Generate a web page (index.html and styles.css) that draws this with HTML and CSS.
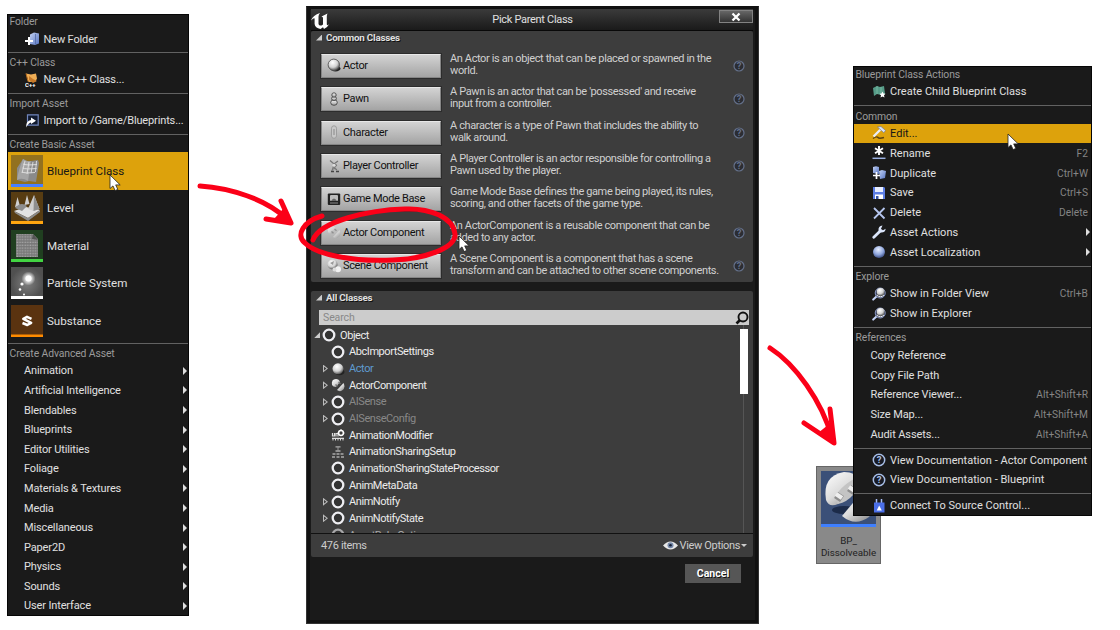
FILE: index.html
```html
<!DOCTYPE html>
<html lang="en">
<head>
<meta charset="utf-8">
<title>Pick Parent Class</title>
<link rel="stylesheet" href="styles.css">
</head>
<body>
<svg class="defs" width="0" height="0">
  <defs>
    <linearGradient id="gBlue" x1="0" y1="0" x2="1" y2="1"><stop offset="0" stop-color="#c3d2f5"/><stop offset="1" stop-color="#5674c0"/></linearGradient>
    <linearGradient id="gWhite" x1="0" y1="0" x2="0" y2="1"><stop offset="0" stop-color="#fff"/><stop offset="1" stop-color="#999"/></linearGradient>
    <linearGradient id="gPlug" x1="0" y1="0" x2=".8" y2="1"><stop offset="0" stop-color="#fff"/><stop offset=".55" stop-color="#dcdcdc"/><stop offset="1" stop-color="#8e8e8e"/></linearGradient>
    <radialGradient id="gBall" cx=".4" cy=".3" r=".7"><stop offset="0" stop-color="#fff"/><stop offset=".6" stop-color="#d2d2d2"/><stop offset="1" stop-color="#555"/></radialGradient>
    <radialGradient id="gGlobe" cx=".45" cy=".3" r=".7"><stop offset="0" stop-color="#e8efff"/><stop offset=".6" stop-color="#8fa6dd"/><stop offset="1" stop-color="#3b4d83"/></radialGradient>
    <radialGradient id="gGlow"><stop offset="0" stop-color="#fff"/><stop offset=".35" stop-color="#fff" stop-opacity=".85"/><stop offset="1" stop-color="#fff" stop-opacity="0"/></radialGradient>
    <radialGradient id="gGray"><stop offset="0" stop-color="#808080"/><stop offset="1" stop-color="#505050"/></radialGradient>
    <pattern id="dots" width="2.6" height="2.8" patternUnits="userSpaceOnUse"><rect width="2.6" height="2.8" fill="#777"/><rect x=".5" y=".6" width="1.5" height="1.3" fill="#a9a9a9"/></pattern>
    <symbol id="cursor" viewBox="0 0 12 18"><path d="M1 1v13.500l3-2.600 2.100 4.700 2.700-1.200-2.100-4.500h4.500z" fill="#fff" stroke="#222" stroke-width=".8"/></symbol>
    <symbol id="help" viewBox="0 0 14 14"><circle cx="7" cy="7" r="5.700" fill="#171b25" stroke="currentColor" stroke-width="1.500"/><text x="7" y="10.400" class="help-mark">?</text></symbol>
    <symbol id="helpdim" viewBox="0 0 14 14"><circle cx="7" cy="7" r="5" fill="#2b2d33" stroke="currentColor" stroke-width="1.200"/><text x="7" y="10.200" class="help-mark">?</text></symbol>
    <symbol id="ring" viewBox="0 0 14 14"><circle cx="7" cy="7" r="5.300" fill="#333" stroke="#eeeef2" stroke-width="2.300"/></symbol>
    <symbol id="mag" viewBox="0 0 14 14"><path d="M5 9L1.200 12.600" stroke="#c3d2f5" stroke-width="2" stroke-linecap="round"/><circle cx="8.200" cy="6" r="5" fill="#26304f" stroke="#8d9cc8" stroke-width="1"/><circle cx="8.600" cy="5" r="4" fill="url(#gBall)"/><path d="M4.500 8q4 3.500 7.500 0" fill="none" stroke="#eee"/></symbol>
    <symbol id="folder" viewBox="0 0 14 14"><path d="M5 2.500l4-2 5 1v10l-4 1.500-5-1z" fill="url(#gBlue)"/><path d="M10.500 2v10" stroke="#5168a4" stroke-width=".8"/><path d="M0 9h8M4 5v8" stroke="#fff" stroke-width="2"/></symbol>
    <symbol id="cpp" viewBox="0 0 14 14"><path d="M1 .5l5 1 5-1 1 5-1.500 3-7 .5z" fill="#f0ae55"/><path d="M4 3l4 3 4 2-4 2-4-3z" fill="#c87a28"/><path d="M1 .5l2 8" stroke="#b96b1d"/><text x="0" y="13.500" class="cpp-mark">C++</text></symbol>
    <symbol id="import" viewBox="0 0 14 14"><path d="M2.500.8h10.700v10.400H2.500z" fill="#111a2d" stroke="#7186bd" stroke-width="1.200"/><path d="M1 13.500q0-7 5-7.500V3.500L11 6.800 6 10V8.500Q3.500 9 1 13.500z" fill="#fff"/></symbol>
    <symbol id="childbp" viewBox="0 0 14 14"><path d="M1 3l4-2 3 1 4-1 1 8-4 1-4-1-3 2z" fill="#579c88"/><path d="M5 1v8M9 2v8" stroke="#83c4ae" stroke-width=".7"/><path d="M10.500 6.500l1 2 2 .2-1.500 1.500.5 2.300-2-1-2 1 .5-2.300L7.500 8.700l2-.2z" fill="#fff"/></symbol>
    <symbol id="edit" viewBox="0 0 14 14"><path d="M1 12.500q4-2.500 5-1t6 0" fill="none" stroke="#5b4310" stroke-width="1.400"/><path d="M1.500 10.500L8.500 3.500" stroke="#e8eefb" stroke-width="2.300"/><path d="M5.500 1l3.500-.5 4.500 4-1.700 2.200z" fill="#dde5f5" stroke="#66718e" stroke-width=".6"/></symbol>
    <symbol id="rename" viewBox="0 0 14 14"><path d="M7 0v9M3 2.200l8 5M11 2.200l-8 5" stroke="#fff" stroke-width="1.900"/><path d="M.5 12.300h13" stroke="#9bb0e0" stroke-width="1.500"/></symbol>
    <symbol id="dup" viewBox="0 0 14 14"><path d="M1 1l3-.8L7 1v7L1 7z" fill="url(#gBlue)"/><path d="M7 5l3-1 4 1-1 7-5 1z" fill="url(#gBlue)"/><path d="M1 9.500h7M4.500 6v7" stroke="#fff" stroke-width="1.700"/></symbol>
    <symbol id="save" viewBox="0 0 14 14"><path d="M1 1h11l1 1v11H1z" fill="#5c7ee6"/><path d="M3 1h8v5H3z" fill="#e8eeff"/><path d="M3 8.500h8V13H3z" fill="#fff"/><path d="M4 10h2.500v3H4z" fill="#3554a8"/></symbol>
    <symbol id="del" viewBox="0 0 14 14"><path d="M2 2l10.500 10.500M12.500 2L2 12.500" stroke="#b6c6ee" stroke-width="1.800"/></symbol>
    <symbol id="wrench" viewBox="0 0 14 14"><path d="M1.800 12.300L8.500 5.800" stroke="#dce6fb" stroke-width="2.800" stroke-linecap="round"/><path d="M10.500.5Q6 1 6.500 5.500l2 2Q13 8 13.700 3.700L11 5.300 8.900 4z" fill="#dce6fb"/></symbol>
    <symbol id="globe" viewBox="0 0 14 14"><circle cx="7" cy="7" r="6" fill="url(#gGlobe)"/></symbol>
    <symbol id="plug" viewBox="0 0 14 14"><path d="M4.500 0v5M9.500 0v5" stroke="#a7bdf5" stroke-width="1.500"/><path d="M2 3.500h10.500v10H2z" fill="#4b6fe8"/><path d="M7.200 6.500l2.600 5H4.700z" fill="#fff"/></symbol>
    <symbol id="ball" viewBox="0 0 14 14"><ellipse cx="8.500" cy="10" rx="5" ry="3.300" fill="#222"/><circle cx="7" cy="6.800" r="5.500" fill="url(#gBall)"/></symbol>
    <symbol id="actorbtn" viewBox="0 0 14 14"><ellipse cx="8.500" cy="10.500" rx="5" ry="3" fill="#222"/><circle cx="6.800" cy="6.800" r="5.700" fill="url(#gBall)" stroke="#555" stroke-width=".9"/></symbol>
    <symbol id="comp" viewBox="0 0 14 14"><path d="M1 7Q0 1 5 1q3 0 4 3L5 9Q2 9 1 7z" fill="url(#gPlug)"/><path d="M6 12L12.500 5Q15 10 11 12.500 8.500 14 6 12z" fill="url(#gPlug)"/><path d="M4.500 6.500l2 1.800M7.500 4l2 1.800" stroke="#777" stroke-width="1.300"/></symbol>
    <symbol id="pawn" viewBox="0 0 14 14"><g fill="url(#gWhite)" stroke="#444" stroke-width=".9"><ellipse cx="7" cy="10.500" rx="3.300" ry="2.800"/><ellipse cx="7" cy="6.500" rx="2.400" ry="2"/><circle cx="7" cy="3" r="2.200"/></g></symbol>
    <symbol id="char" viewBox="0 0 14 14"><rect x="4.500" y=".8" width="5" height="12.500" rx="2.500" fill="#c8c8c8" stroke="#999" stroke-width=".9"/><path d="M7 4v6" stroke="#888"/></symbol>
    <symbol id="ctrl" viewBox="0 0 14 14"><path d="M3 1.500L7 5l4-3" fill="none" stroke="#777" stroke-width="1.300"/><path d="M7 5l3 1-2 2.500 2 2.500-3-1.500-2 2 1-3.500z" fill="#888" stroke="#666" stroke-width=".6"/><path d="M4 12.500h3M9 12.500h3" stroke="#444" stroke-width="1.500"/><circle cx="7" cy="6.300" r="1.500" fill="#ddd"/></symbol>
    <symbol id="mode" viewBox="0 0 14 14"><rect x=".8" y="1.500" width="12.400" height="11.500" rx="1" fill="#222"/><rect x="3" y="3" width="8" height="6" rx="1" fill="#bbb"/><path d="M3 11h8" stroke="#888"/><path d="M4 9q3-5 6 0z" fill="#666"/></symbol>
    <symbol id="scene" viewBox="0 0 14 14"><circle cx="5.500" cy="5.500" r="5" fill="url(#gBall)"/><path d="M3 4l4-2-1 4z" fill="#999"/><circle cx="11" cy="10.300" r="3" fill="#f2f2f2"/><circle cx="7.500" cy="10.500" r="2" fill="#ddd"/></symbol>
    <symbol id="animmod" viewBox="0 0 14 14"><path d="M1 10.300h12M1.500 5v3h2V5M5 8.500V5.500h2v3" stroke="#ddd" stroke-width="1.200" fill="none"/><path d="M2 10.500v2M4.500 10.500v2M7 10.500v2M9.500 10.500v2M12 10.500v2" stroke="#ddd"/><circle cx="10" cy="5" r="2.400" fill="none" stroke="#fff" stroke-width="1.500"/><path d="M10 1v1.500M6.500 5h1M12.500 5h1" stroke="#fff"/></symbol>
    <symbol id="sharing" viewBox="0 0 14 14"><path d="M4.500 1.800h5M4.500 6h5M1 12h3M5.500 12h3M10 12h3M1.500 9h3M5.500 9h3M9.500 9h3" stroke="#aaa" stroke-width="1.300"/><path d="M7 2v4" stroke="#999"/></symbol>
  </defs>
</svg>

<main class="stage">
  <section class="asset">
    <svg class="asset-thumb" viewBox="0 0 55 56"><rect width="55" height="56" fill="#3b5078"/><ellipse cx="23" cy="39" rx="12" ry="4" fill="#1c2b49"/><path d="M5 29Q1 5 23 1q12 0 15 8L17 33Q8 37 5 29z" fill="url(#gPlug)"/><path d="M17 33Q12 27 18 20T33 8l5 1q0 8-6 15T17 33z" fill="#c4c4c4"/><path d="M21 45L42 20Q60 33 48 46 34 56 21 45z" fill="url(#gPlug)"/><path d="M15 24l6 4M28 17l6 4" stroke="#8d8d8d" stroke-width="7"/><path d="M15 23l6 4M28 16l6 4" stroke="#eee" stroke-width="4.500"/><rect y="53" width="55" height="3" fill="#3e7fff"/></svg>
    <p class="asset-name">BP_<br>Dissolveable</p>
  </section>

  <nav class="menu menu-left">
    <div class="group"><h2>Folder</h2><div class="item iconed"><svg><use href="#folder"/></svg><span>New Folder</span></div></div>
    <div class="group"><h2>C++ Class</h2><div class="item iconed"><svg><use href="#cpp"/></svg><span>New C++ Class...</span></div></div>
    <div class="group"><h2>Import Asset</h2><div class="item iconed"><svg><use href="#import"/></svg><span>Import to /Game/Blueprints...</span></div></div>
    <div class="group">
      <h2>Create Basic Asset</h2>
      <div class="big selected"><svg viewBox="0 0 32 32"><rect width="32" height="32" fill="#92711f"/><path d="M6 13L12 4l4 2 4 0 7-1 1 3-3 19-7-1-4 1-8-2z" fill="#8a8a8a"/><path d="M12 4q4 3 8 2l-3 20q-6-4-11-1 1-9 6-21z" fill="#a5a5a5"/><path d="M12 9q3 1.500 14 .5M11.500 13q3 1.500 14 .5M11 17q3 1.500 13 .5M14 6l-3 12M18 7l-2 12M22 7l-2 11M25.500 6l-1 11" stroke="#e2e2e2" stroke-width=".9" fill="none"/><rect y="29" width="32" height="3" fill="#477fff"/></svg><span>Blueprint Class</span></div>
      <div class="big"><svg viewBox="0 0 32 32"><rect width="32" height="32" fill="#573c12"/><path d="M3 19l12-4 14 3-12 8z" fill="#e2e2e2"/><path d="M3 19l14 7v3L4 21zM17 26l12-8v2l-12 9z" fill="#8b8b8b"/><path d="M4 15L6.500 5 9 14zM13.500 13L16 3l2.500 9zM17 17l6-14 5.500 14-6 2z" fill="#cfcfcf"/><path d="M23 3l5.500 14-6 2zM4 16q6-7 12-2l-5 5z" fill="#8e8e8e"/><rect y="29" width="32" height="3" fill="#ffa510"/></svg><span>Level</span></div>
      <div class="big"><svg viewBox="0 0 32 32"><rect width="32" height="32" fill="#203f20"/><path d="M5 4h17l5 5v18H5z" fill="url(#dots)"/><path d="M22 4l5 6-6-1z" fill="#555"/><rect y="29" width="32" height="3" fill="#42d442"/></svg><span>Material</span></div>
      <div class="big"><svg viewBox="0 0 32 32"><rect width="32" height="32" fill="url(#gGray)"/><circle cx="17.500" cy="11.500" r="7" fill="url(#gGlow)"/><g fill="#fff"><circle cx="17.500" cy="11.500" r="3"/><circle cx="11" cy="17" r="1.600"/><circle cx="9" cy="22.500" r="1.300"/><circle cx="13" cy="27.500" r="1"/></g><rect y="29" width="32" height="3" fill="#fff"/></svg><span>Particle System</span></div>
      <div class="big"><svg viewBox="0 0 32 32"><rect width="32" height="32" fill="#5a3310"/><path d="M20.500 13.800L16 11.800l-3.700 2 7.900 4-3.900 2.200-4.800-2" fill="none" stroke="#fff" stroke-width="2.500" stroke-linejoin="round"/><rect y="29.500" width="32" height="2.500" fill="#ff8b00"/></svg><span>Substance</span></div>
    </div>
    <div class="group">
      <h2>Create Advanced Asset</h2>
      <div class="item sub"><span>Animation</span></div>
      <div class="item sub"><span>Artificial Intelligence</span></div>
      <div class="item sub"><span>Blendables</span></div>
      <div class="item sub"><span>Blueprints</span></div>
      <div class="item sub"><span>Editor Utilities</span></div>
      <div class="item sub"><span>Foliage</span></div>
      <div class="item sub"><span>Materials &amp; Textures</span></div>
      <div class="item sub"><span>Media</span></div>
      <div class="item sub"><span>Miscellaneous</span></div>
      <div class="item sub"><span>Paper2D</span></div>
      <div class="item sub"><span>Physics</span></div>
      <div class="item sub"><span>Sounds</span></div>
      <div class="item sub"><span>User Interface</span></div>
    </div>
  </nav>

  <section class="dialog">
    <header class="titlebar">
      <svg class="ue" viewBox="0 0 20 16"><path d="M0 7.500Q2 2 9 0 7.500 1.500 7.500 3.500V11q.5 2 3 1.500l1.500-1v-7L10.500 3.500l6-3q-.7 1.500-.7 3v8q.7 1.500 2.500-.5Q16 15 13 16l-1-1.700L9.500 16Q4 15 3.600 11V5.500Q3 4.500 0 7.500z" fill="#fff"/></svg>
      <h1>Pick Parent Class</h1>
      <button class="close"><svg viewBox="0 0 10 10"><path d="M1.500 1.500l7 7M8.500 1.500l-7 7" stroke="#fff" stroke-width="2.300"/></svg></button>
    </header>
    <div class="panel common">
      <h3>Common Classes</h3>
      <div class="row"><button class="pick"><svg><use href="#actorbtn"/></svg>Actor</button><p>An Actor is an object that can be placed or spawned in the<br>world.</p><svg class="q"><use href="#helpdim"/></svg></div>
      <div class="row"><button class="pick"><svg><use href="#pawn"/></svg>Pawn</button><p>A Pawn is an actor that can be 'possessed' and receive<br>input from a controller.</p><svg class="q"><use href="#helpdim"/></svg></div>
      <div class="row"><button class="pick"><svg><use href="#char"/></svg>Character</button><p>A character is a type of Pawn that includes the ability to<br>walk around.</p><svg class="q"><use href="#helpdim"/></svg></div>
      <div class="row"><button class="pick"><svg><use href="#ctrl"/></svg>Player Controller</button><p>A Player Controller is an actor responsible for controlling a<br>Pawn used by the player.</p><svg class="q"><use href="#helpdim"/></svg></div>
      <div class="row"><button class="pick"><svg><use href="#mode"/></svg>Game Mode Base</button><p>Game Mode Base defines the game being played, its rules,<br>scoring, and other facets of the game type.</p></div>
      <div class="row"><button class="pick"><svg class="faded"><use href="#comp"/></svg>Actor Component</button><p>An ActorComponent is a reusable component that can be<br>added to any actor.</p><svg class="q"><use href="#helpdim"/></svg></div>
      <div class="row"><button class="pick"><svg><use href="#scene"/></svg>Scene Component</button><p>A Scene Component is a component that has a scene<br>transform and can be attached to other scene components.</p><svg class="q"><use href="#helpdim"/></svg></div>
    </div>
    <div class="panel all">
      <h3>All Classes</h3>
      <div class="search"><span>Search</span><svg viewBox="0 0 14 14"><circle cx="8" cy="6" r="4.500" fill="none" stroke="#111" stroke-width="1.900"/><path d="M5 9l-3.500 3.500" stroke="#111" stroke-width="2.600"/></svg></div>
      <div class="tree-area">
        <div class="tree">
          <div class="node root"><i class="open"></i><svg><use href="#ring"/></svg><span>Object</span></div>
          <div class="node"><i></i><svg><use href="#ring"/></svg><span>AbcImportSettings</span></div>
          <div class="node"><i class="shut"></i><svg><use href="#ball"/></svg><span class="blue">Actor</span></div>
          <div class="node"><i class="shut"></i><svg><use href="#comp"/></svg><span>ActorComponent</span></div>
          <div class="node"><i class="shut"></i><svg><use href="#ring"/></svg><span class="dim">AISense</span></div>
          <div class="node"><i class="shut"></i><svg><use href="#ring"/></svg><span class="dim">AISenseConfig</span></div>
          <div class="node"><i></i><svg><use href="#animmod"/></svg><span>AnimationModifier</span></div>
          <div class="node"><i></i><svg><use href="#sharing"/></svg><span>AnimationSharingSetup</span></div>
          <div class="node"><i></i><svg><use href="#ring"/></svg><span>AnimationSharingStateProcessor</span></div>
          <div class="node"><i></i><svg><use href="#ring"/></svg><span>AnimMetaData</span></div>
          <div class="node"><i class="shut"></i><svg><use href="#ring"/></svg><span>AnimNotify</span></div>
          <div class="node"><i class="shut"></i><svg><use href="#ring"/></svg><span>AnimNotifyState</span></div>
          <div class="node last"><i></i><svg><use href="#ring"/></svg><span>AssetBakeOptions</span></div>
        </div>
        <div class="scroll"><div class="thumb"></div></div>
      </div>
      <footer class="status"><span>476 items</span><span class="view"><svg viewBox="0 0 15 9"><path d="M0 4.500Q7.500-3.500 15 4.500 7.500 12.500 0 4.500z" fill="#e8e8e8"/><circle cx="7.500" cy="4.200" r="3" fill="#7487a8"/><circle cx="7.500" cy="4.200" r="1.300" fill="#172238"/></svg>View Options<i></i></span></footer>
    </div>
    <div class="actions"><button class="cancel">Cancel</button></div>
  </section>

  <nav class="menu menu-right">
    <div class="group"><h2>Blueprint Class Actions</h2><div class="item iconed"><svg><use href="#childbp"/></svg><span>Create Child Blueprint Class</span></div></div>
    <div class="group">
      <h2>Common</h2>
      <div class="item iconed selected"><svg><use href="#edit"/></svg><span>Edit...</span></div>
      <div class="item iconed"><svg><use href="#rename"/></svg><span>Rename</span><kbd>F2</kbd></div>
      <div class="item iconed"><svg><use href="#dup"/></svg><span>Duplicate</span><kbd>Ctrl+W</kbd></div>
      <div class="item iconed"><svg><use href="#save"/></svg><span>Save</span><kbd>Ctrl+S</kbd></div>
      <div class="item iconed"><svg><use href="#del"/></svg><span>Delete</span><kbd>Delete</kbd></div>
      <div class="item iconed sub"><svg><use href="#wrench"/></svg><span>Asset Actions</span></div>
      <div class="item iconed sub"><svg><use href="#globe"/></svg><span>Asset Localization</span></div>
    </div>
    <div class="group">
      <h2>Explore</h2>
      <div class="item iconed"><svg><use href="#mag"/></svg><span>Show in Folder View</span><kbd>Ctrl+B</kbd></div>
      <div class="item iconed"><svg><use href="#mag"/></svg><span>Show in Explorer</span></div>
    </div>
    <div class="group">
      <h2>References</h2>
      <div class="item"><span>Copy Reference</span></div>
      <div class="item"><span>Copy File Path</span></div>
      <div class="item"><span>Reference Viewer...</span><kbd>Alt+Shift+R</kbd></div>
      <div class="item"><span>Size Map...</span><kbd>Alt+Shift+M</kbd></div>
      <div class="item"><span>Audit Assets...</span><kbd>Alt+Shift+A</kbd></div>
    </div>
    <div class="group bare">
      <div class="item iconed"><svg class="doc"><use href="#help"/></svg><span>View Documentation - Actor Component</span></div>
      <div class="item iconed"><svg class="doc"><use href="#help"/></svg><span>View Documentation - Blueprint</span></div>
    </div>
    <div class="group bare"><div class="item iconed"><svg><use href="#plug"/></svg><span>Connect To Source Control...</span></div></div>
  </nav>

  <svg class="marks" viewBox="0 0 1120 630">
    <g fill="none" stroke="#fb0018" stroke-width="5" stroke-linecap="round" stroke-linejoin="round">
      <path d="M200 186C230 188 266 199 287 219"/>
      <path d="M281 201L291 223 266 219"/>
      <path d="M770 348C795 364 822 401 832 438"/>
      <path d="M830 409L834 443 804 423"/>
      <path d="M322 216C304 221 295 235 305 243C317 255 354 262 393 260C425 259 456 248 455 234C453 217 430 208 405 209C369 210 320 221 313 240"/>
    </g>
    <path d="M283 209l9 15-18-5zM828 425l7 20-17-12z" fill="#fb0018"/>
    <use href="#cursor" x="109" y="174" width="12" height="18"/>
    <use href="#cursor" x="458" y="235" width="12" height="18"/>
    <use href="#cursor" x="1007" y="133" width="12" height="18"/>
  </svg>
</main>
</body>
</html>
```
FILE: styles.css
```css
* { box-sizing: border-box; }
body { margin: 0; background: #fff; font-family: Roboto, "Liberation Sans", sans-serif; font-size: 11px; color: #e0e0e0; }
h1, h2, h3, p { margin: 0; font-weight: 400; }
button { font: inherit; letter-spacing: inherit; margin: 0; border: 0; padding: 0; }
svg { display: block; flex: none; }
.defs { position: absolute; }
.stage { position: relative; width: 1120px; height: 630px; overflow: hidden; }
.help-mark { font: bold 9.5px Roboto, sans-serif; text-anchor: middle; fill: currentColor; letter-spacing: 0; }
.cpp-mark { font: bold 6px Roboto, sans-serif; fill: #fff; letter-spacing: 0; }

/* Context menus */
.menu { position: absolute; background: #1a1a1a; border: 1px solid #060606; white-space: nowrap; }
.menu-left { left: 7px; top: 14px; width: 182px; height: 602px; --pitch: 19.6px; }
.menu-right { left: 853px; top: 66px; width: 239px; height: 450px; --pitch: 19.8px; }
.group + .group { margin-top: 3px; border-top: 1px solid #626262; padding-top: 2.4px; }
.menu-left .group:first-child { margin-top: -.8px; }
.menu-right .group + .group { margin-top: 3.6px; padding-top: 2.2px; }
.menu-right .group + .bare { padding-top: 1.4px; }
.menu h2 { height: 15px; line-height: 15px; padding-left: 1.5px; font-size: 10.4px; color: #9b9b9b; letter-spacing: -.12px; }
.item { display: flex; align-items: center; height: var(--pitch); padding: 0 3px 0 16px; letter-spacing: -.14px; }
.item.iconed { padding-left: 17px; }
.item svg { width: 14px; height: 14px; margin-right: 4.5px; }
.item .doc { color: #a7bde5; }
.item kbd { margin-left: auto; font: 10.2px Roboto, sans-serif; color: #858585; letter-spacing: .03px; }
.menu-right .item { padding-left: 16.5px; letter-spacing: -.1px; }
.menu-right .item.iconed { padding-left: 17.5px; }
.menu-right .item.iconed span { letter-spacing: .02px; }
.item.sub { padding-right: 1px; }
.menu-right .item.sub { padding-right: 1px; }
.item.sub::after { content: ""; margin-left: auto; border: 4px solid transparent; border-left-color: #dedede; border-right: 0; }
.selected { background: #dda20c; color: #161616; }
.big { display: flex; align-items: center; height: 37.5px; padding-left: 3px; font-size: 11.6px; letter-spacing: -.03px; }
.big svg { width: 32px; height: 32px; margin-right: 4px; }

/* Class picker window */
.dialog { position: absolute; left: 306px; top: 6px; width: 453px; height: 618px; background: #1a1a1a; border: 1px solid #333; border-top-color: #111; padding: 2px 5px 0 4px; box-shadow: inset 0 0 0 3px #111; letter-spacing: -.38px; }
.titlebar { display: flex; align-items: flex-start; justify-content: space-between; height: 22px; background: linear-gradient(#3b3b3b, #1a1a1a); border-bottom: 1px solid #080808; }
.ue { width: 20px; height: 16px; margin-top: 4px; }
.titlebar h1 { flex: 1; text-align: center; font-size: 11px; line-height: 21px; padding-left: 15px; letter-spacing: -.3px; }
.close { display: grid; place-items: center; width: 34px; height: 13px; background: linear-gradient(#666, #333); border: 1px solid #828282; margin: 1px 0 0; }
.close svg { width: 10px; height: 10px; }
.panel { background: #3d3d3d; border-radius: 2px; }
.panel h3 { display: flex; align-items: center; gap: 4px; height: 13px; padding-left: 5px; font-size: 9.8px; font-weight: 700; letter-spacing: -.22px; text-shadow: 1px 1px 0 #111; }
.panel h3::before { content: ""; width: 6px; height: 6px; background: #ccc; clip-path: polygon(100% 0, 100% 100%, 0 100%); }
.common { height: 251px; }
.common h3 { margin-bottom: 5.3px; }
.row { display: flex; align-items: center; height: 33.35px; padding: 0 7px 0 10px; }
.pick { display: flex; flex: none; align-items: center; gap: 2px; width: 120px; height: 24px; padding: 0 0 1px 5px; color: #111; background: linear-gradient(#d3d3d3, #a4a4a4); border: 1px solid #858585; border-top-color: #e8e8e8; box-shadow: 0 0 0 1px #2c2c2c; white-space: nowrap; letter-spacing: -.34px; }
.pick svg { width: 14px; height: 14px; }
.faded { opacity: .65; }
.row p { flex: 1; margin-left: 9px; line-height: 12px; color: #d0d0d0; white-space: nowrap; margin-top: -2px; }
.q { width: 14px; height: 14px; color: #64708a; }
.all { height: 266px; margin-top: 9px; overflow: hidden; }
.search { display: flex; align-items: center; justify-content: space-between; height: 15px; margin: 6px 4px 0 8px; padding-left: 4px; background: #ccc; color: #888; font-size: 10.5px; letter-spacing: -.1px; }
.search svg { width: 14px; height: 14px; }
.tree-area { display: flex; height: 209px; overflow: hidden; border-bottom: 1.5px solid #111; }
.tree { flex: 1; padding-top: 2px; color: #ececec; }
.node { display: flex; align-items: center; height: 16.65px; padding-left: 11px; white-space: nowrap; letter-spacing: -.43px; }
.node.root { padding-left: 3px; }
.node svg { width: 14px; height: 14px; margin-right: 4px; }
.node i { width: 9px; height: 8px; }
.node i.open { width: 8px; height: 6px; background: #ccc; clip-path: polygon(6px 0, 6px 6px, 0 6px); }
.node i.shut { background: #bbb; clip-path: polygon(1px 0, 6px 4px, 1px 8px, 1px 1.5px, 2px 2.2px, 2px 5.8px, 4.4px 4px, 1px 1.5px); }
.blue { color: #5f9bd0; }
.dim { color: #888; }
.node.last { opacity: .6; }
.scroll { width: 14px; padding: 4px 0 0; background: linear-gradient(#555, #555) no-repeat 4px 0 / 1px 100%; }
.thumb { width: 8px; height: 65px; margin-left: 1px; background: #fff; }
.status { display: flex; justify-content: space-between; align-items: center; height: 22px; padding: 0 6px 0 10px; color: #ccc; letter-spacing: -.34px; }
.view { display: flex; align-items: center; }
.view svg { width: 15px; height: 9px; margin-right: 2px; }
.view i { border: 3.5px solid transparent; border-top-color: #ccc; border-bottom: 0; margin-left: 1px; }
.actions { display: flex; justify-content: flex-end; padding: 7px 12px 0 0; }
.cancel { width: 56px; height: 19px; background: #565656; color: #fff; font-weight: 700; font-size: 10.6px; letter-spacing: 0; text-shadow: 1px 1px 0 #111; }

/* Content browser tile */
.asset { position: absolute; left: 816px; top: 466px; width: 65px; height: 98px; background: #898989; border: 1px solid #666; padding: 4px 4px 0; }
.asset-thumb { width: 55px; height: 56px; }
.asset-name { margin-top: 8px; text-align: center; font-size: 9.8px; line-height: 12px; color: #222; white-space: nowrap; margin-inline: -4px; }

.marks { position: absolute; inset: 0; width: 1120px; height: 630px; pointer-events: none; }
```
